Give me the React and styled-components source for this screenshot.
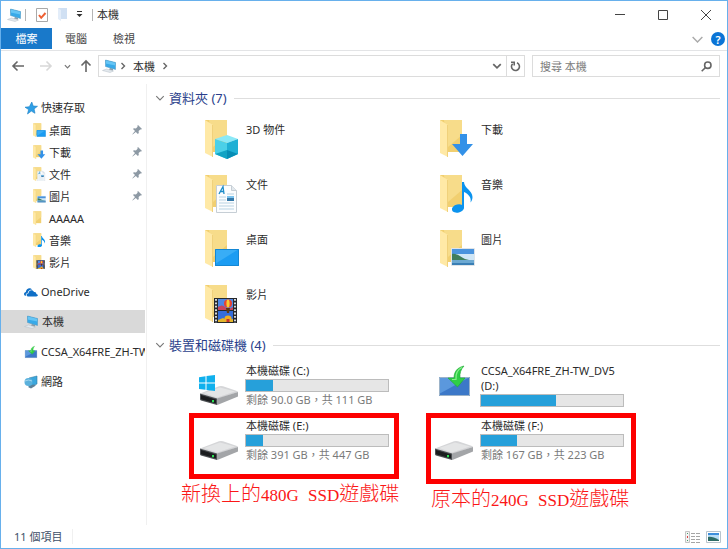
import React from "react";
import styled, { createGlobalStyle, css } from "styled-components";

const GlobalStyle = createGlobalStyle`
  *, *::before, *::after { box-sizing: border-box; }
  body {
    margin: 0;
    background: #fff;
    color: #2b2b2b;
    font: 11px/15px "Noto Sans", "Noto Sans CJK TC", sans-serif;
  }
  button, input { font: inherit; color: inherit; }
  svg { display: block; flex: none; }
`;

const PlainButton = styled.button.attrs({ type: "button" })`
  display: flex;
  align-items: center;
  justify-content: center;
  flex: none;
  padding: 0;
  border: 0;
  background: none;
`;

const Window = styled.div`
  display: flex;
  flex-direction: column;
  min-height: 100vh;
  border: 1px solid #67b0ec;
  background: #fff;
`;

const TitleBar = styled.header`
  display: flex;
  align-items: center;
  height: 27px;
  padding-left: 6px;
`;

const QuickTools = styled.div`
  display: flex;
  align-items: center;
  flex: none;
`;

const ToolButton = styled(PlainButton)`
  width: ${(p) => p.$width}px;
  height: 20px;
`;

const Divider = styled.span`
  width: 1px;
  height: 12px;
  background: #b5b5b5;
`;

const WindowTitle = styled.h1`
  flex: 1;
  margin: 0 0 0 4px;
  font-size: 11px;
  font-weight: 400;
`;

const CaptionButton = styled(PlainButton)`
  width: 43px;
  height: 26px;
`;

const TabBar = styled.nav`
  display: flex;
  align-items: stretch;
  height: 23px;
  border-bottom: 1px solid #e3e4e6;
`;

const Tab = styled(PlainButton)`
  width: ${(p) => (p.$primary ? 51 : 48)}px;
  height: 21px;
  color: ${(p) => (p.$primary ? "#fff" : "#444")};
  background: ${(p) => (p.$primary ? "#1979ca" : "transparent")};
`;

const TabTools = styled.div`
  display: flex;
  align-items: center;
  gap: 7px;
  margin-left: auto;
  padding-right: 2px;
`;

const HelpButton = styled(PlainButton)`
  width: 14px;
  height: 14px;
  border-radius: 50%;
  background: #0a74d6;
  color: #fff;
  font-size: 11px;
  font-weight: 600;
`;

const NavRow = styled.div`
  display: flex;
  align-items: center;
  gap: 7px;
  padding: 4px 7px 7px 3px;
`;

const NavButtons = styled.div`
  display: flex;
  align-items: center;
  flex: none;
  margin-right: -7px;
`;

const AddressBar = styled.div`
  display: flex;
  align-items: center;
  flex: 1;
  min-width: 0;
  height: 22px;
  border: 1px solid #dcdcdc;
`;

const Crumb = styled(PlainButton)`
  padding: 0 3px;
`;

const AddressEnd = styled.div`
  display: flex;
  align-items: center;
  height: 100%;
  margin-left: auto;
`;

const RefreshButton = styled(PlainButton)`
  width: 18px;
  height: 100%;
  border-left: 1px solid #dcdcdc;
`;

const SearchBox = styled.label`
  display: flex;
  align-items: center;
  flex: 0 1 188px;
  height: 22px;
  padding: 0 7px;
  border: 1px solid #dcdcdc;
`;

const SearchInput = styled.input`
  flex: 1;
  min-width: 0;
  padding: 0;
  border: 0;
  outline: 0;
  background: none;
  &::placeholder { color: #7c7c7c; opacity: 1; }
`;

const Body = styled.div`
  display: flex;
  flex: 1;
`;

const Sidebar = styled.nav`
  display: flex;
  flex-direction: column;
  flex: none;
  gap: 7px;
  width: 146px;
  padding: 12px 1px 0 0;
  border-right: 1px solid #f0f0f0;
`;

const SideGroup = styled.div`
  display: flex;
  flex-direction: column;
`;

const SideItem = styled.a`
  display: flex;
  align-items: center;
  height: 23px;
  gap: 3px;
  padding-left: 23px;
  overflow: hidden;
  white-space: nowrap;
  color: #2b2b2b;
  text-decoration: none;
  ${(p) => p.$child && css`
    height: 22px;
    padding-left: 31px;
    padding-right: 3px;
  `}
  ${(p) => p.$selected && css`background: #d9d9d9;`}
`;

const PinSlot = styled.span`
  margin-left: auto;
`;

const Main = styled.main`
  flex: 1;
  min-width: 0;
  padding: 4px 7px 0 8px;
`;

const Group = styled.section`
  margin-bottom: 4px;
`;

const GroupHeader = styled.h2`
  display: flex;
  align-items: center;
  height: 20px;
  margin: 0;
  color: #2b3f8c;
  font-size: 13px;
  font-weight: 400;
  line-height: 20px;
  &::after {
    content: "";
    flex: 1;
    height: 1px;
    margin-left: 7px;
    background: #dedede;
  }
`;

const GroupToggle = styled(PlainButton)`
  gap: 4px;
`;

const TileGrid = styled.div`
  display: grid;
  grid-template-columns: repeat(auto-fill, 235px);
  row-gap: 8px;
  padding: ${(p) => (p.$dense ? 5 : 11)}px 0 0 44px;
`;

const Tile = styled.article`
  position: relative;
  display: flex;
  gap: 4px;
  height: 47px;
`;

const TileText = styled.div`
  width: 144px;
  padding-top: 3px;
`;

const TileName = styled.div`
  padding: 0 0 1px 1px;
`;

const Capacity = styled.div`
  height: 13px;
  border: 1px solid #bcbcbc;
  background: #e6e6e6;
`;

const CapacityFill = styled.div`
  height: 100%;
  width: ${(p) => p.$percent}%;
  background: #26a0da;
`;

const TileNote = styled.div`
  padding: 0 0 0 1px;
  color: #7a7a7a;
  white-space: nowrap;
`;

const Callout = styled.div`
  position: absolute;
  top: -2px;
  left: ${(p) => (p.$tall ? -8 : -10)}px;
  width: 210px;
  height: ${(p) => (p.$tall ? 71 : 66)}px;
  border: 5px solid #fd0000;
`;

const CalloutText = styled.p`
  position: absolute;
  top: 100%;
  left: ${(p) => (p.$tall ? 0 : -13)}px;
  margin: 8px 0 0;
  color: #fb1717;
  font-family: "Liberation Serif", "Noto Sans CJK TC", serif;
  font-size: 20px;
  font-weight: 300;
  line-height: 24px;
  white-space: nowrap;
`;

const CalloutLatin = styled.span`
  font-size: 17px;
`;

const CalloutUnit = styled(CalloutLatin)`
  margin-left: 5px;
`;

const StatusBar = styled.footer`
  display: flex;
  align-items: center;
  height: 23px;
  padding: 0 6px 0 13px;
  color: #3d5068;
`;

const StatusCount = styled.span`
  padding-right: 10px;
  border-right: 1px solid #f0f0f0;
`;

const ViewSwitch = styled.div`
  display: flex;
  gap: 6px;
  margin-left: auto;
`;

function PcIcon() {
  return (
    <svg width="15" height="14" viewBox="0 0 15 14">
      <path d="M.5 11.500l4-1.500 7 2-3.500 1.500z" fill="#e3e9ee" stroke="#b4bec6" strokeWidth=".5" />
      <path d="M8 9l3 .8v1.700l-4-1z" fill="#8c9ca8" />
      <path d="M3.500 1l10 2.500v7l-10-3z" fill="#38aae9" />
      <path d="M3.500 1l10 2.500v3l-10-2z" fill="#65c5f5" />
      <path d="M3.500 1l10 2.500v7l-10-3z" fill="none" stroke="#4a93bd" strokeWidth=".5" />
    </svg>
  );
}

function Chevron({ dir = "down", size = 8, color = "#555", weight = 1.4 }) {
  const d = dir === "down" ? "M1 2.5l3 3 3-3" : "M2.5 1l3 3-3 3";
  return (
    <svg width={size} height={size} viewBox="0 0 8 8" fill="none" stroke={color} strokeWidth={weight}>
      <path d={d} />
    </svg>
  );
}

function Arrow({ dir, color = "#666" }) {
  const paths = {
    left: "M13 7H2M6.5 2.500L2 7l4.500 4.500",
    right: "M1 7h11M7.500 2.500L12 7l-4.500 4.500",
    up: "M7 13V2M2.500 6.500L7 2l4.500 4.500",
  };
  return (
    <svg width="14" height="14" viewBox="0 0 14 14" fill="none" stroke={color} strokeWidth="1.600">
      <path d={paths[dir]} />
    </svg>
  );
}

function PinIcon() {
  return (
    <svg width="10" height="10" viewBox="0 0 10 10">
      <path d="M6 0l4 4-1 .6-.7-.2-1.700 1.700.2 2-.9.9L3.800 6.900.6 9.600l-.3-.3L3 6.100 1 4.100l.9-.9 2 .2 1.700-1.700-.2-.9z" fill="#8d99a4" />
    </svg>
  );
}

const overlays = {
  cube: (
    <g>
      <path d="M16 20l12-4 11 4-11 4z" fill="#8be9f7" />
      <path d="M16 20l12 4v16l-12-5z" fill="#4bd0e8" />
      <path d="M39 20l-11 4v16l11-5z" fill="#1fb0d5" />
      <path d="M16 35l12-4v9z" fill="#12a3c4" />
      <path d="M39 35l-11-4v9z" fill="#078db5" />
    </g>
  ),
  arrow: <path d="M26 15h7v10h6L28.500 37 18 25h8z" fill="#3391e8" />,
  document: (
    <g>
      <path d="M17.500 11.500h15l5 5v22h-20z" fill="#fcfdfe" stroke="#c6ced5" />
      <path d="M32.500 11.500v5h5" fill="#e3e9ee" stroke="#c6ced5" />
      <path d="M20 20l4-7.500 1 7.500M21.500 17.500H25" fill="none" stroke="#1d8cc8" strokeWidth="1.300" />
      <path d="M20 23h7M20 26h7M20 29h15M20 32h15M20 35h15M28 20h7" stroke="#b9d3e3" strokeWidth="1" />
      <path d="M28 22h7v5h-7z" fill="#3578a8" />
      <path d="M28 22h7v2h-7z" fill="#7cc4ef" />
    </g>
  ),
  note: (
    <g fill="#0b93ee">
      <ellipse cx="24" cy="34.500" rx="6.200" ry="4" transform="rotate(-14 24 34.500)" />
      <path d="M28 8h2c0 6 8.500 8.500 8.500 15 0 2.500-1 4.500-2 5.500 1.200-5-2-8.500-6.500-10.500v16h-2z" />
    </g>
  ),
  desktop: (
    <g>
      <path d="M16 20h24v17H16z" fill="#1b9cf2" />
      <path d="M16 20h24L16 35z" fill="#38adf6" />
      <path d="M16.500 20.500h23v16h-23z" fill="none" stroke="#1487d4" />
    </g>
  ),
  picture: (
    <g>
      <path d="M17.500 19.500h23v17h-23z" fill="#fff" stroke="#dfe4e8" />
      <path d="M18 20h22v16H18z" fill="#cfe6f6" />
      <path d="M18 20h22v5H18z" fill="#4a93dd" />
      <path d="M18 25c5-1 9 3 13 5l8 2H18z" fill="#3f7d5c" />
      <path d="M18 31h22v5H18z" fill="#6da9d2" />
      <path d="M18 34h22v2H18z" fill="#3a7fb5" />
    </g>
  ),
  film: (
    <g>
      <path d="M15 14h23v25H15z" fill="#26282c" />
      <path d="M19 15h15v11H19z" fill="#4e87e4" />
      <path d="M19 27h15v11H19z" fill="#346ddb" />
      <path d="M19 23q4-3 7 0t8 0v3H19z" fill="#c7455d" />
      <path d="M19 36l5-2 4 2 6-1v3H19z" fill="#e1b52c" />
      <ellipse cx="29" cy="19.500" rx="4" ry="4" fill="#e94232" />
      <ellipse cx="29" cy="19.500" rx="1.600" ry="4" fill="#f6cd31" />
      <path d="M27 24h4l-1 5h-2z" fill="#5c3816" />
      <ellipse cx="29" cy="34.500" rx="3.500" ry="3" fill="#f0ae21" />
      <path d="M27.500 35h3v3h-3z" fill="#cb332c" />
      <path d="M17 15v24M36 15v24" stroke="#e9ecef" strokeWidth="1.800" strokeDasharray="1.800 1.600" />
    </g>
  ),
};

function FolderShape() {
  return (
    <g>
      <path d="M6 1h22v32H6z" fill="#f1cf70" />
      <path d="M10 1h18v15L14 28z" fill="#f7dc8a" />
      <path d="M6 1l8 5v32l-8-4z" fill="#ffe9a6" />
      <path d="M13.500 6v32" stroke="#ecca70" strokeWidth=".8" />
    </g>
  );
}

function FolderIcon({ kind }) {
  return (
    <svg width="42" height="42" viewBox="0 0 42 42">
      <FolderShape />
      {overlays[kind]}
    </svg>
  );
}

function SmallFolderIcon({ kind }) {
  return (
    <svg width="14" height="14" viewBox="4 0 36 38">
      <FolderShape />
      {overlays[kind]}
    </svg>
  );
}

function DriveIcon({ windows }) {
  return (
    <svg width="42" height="46" viewBox="0 0 42 46">
      <path d="M1 33.500L20 26.300q2-.6 4 0L38 31q1.500.6.500 1.300L18 39z" fill="#d5d6d8" />
      <path d="M5 33l16-5.500 15 4L18 37.500z" fill="#e4e5e6" />
      <path d="M18 38.500L39 32v4.500L19.500 44.600 18 45z" fill="#a3a5a8" />
      <path d="M1 33.500l17 5V45L2 40.500q-1-.4-1-1.500z" fill="#4c4f53" />
      <path d="M2 35l15 4.500v4L2 39.300z" fill="#1b1d1f" />
      <path d="M13 40h2v2.200h-2z" fill="#2cdf53" />
      {windows && (
        <path d="M0 17.200l6.500-1v6.300H0zM7.500 16L16 15v7.500H7.500zM0 23.500h6.500v6.300L0 29zM7.500 23.500H16V31l-8.500-1.100z" fill="#10b0ed" />
      )}
    </svg>
  );
}

function InstallerShape() {
  return (
    <g>
      <path d="M5 17h31v19H5z" fill="#3c78c8" />
      <path d="M5 17h31L5 34z" fill="#5b98dd" />
      <path d="M5.500 17.500h30v18h-30z" fill="none" stroke="#9cb3c9" />
      <path d="M30 6c-7 1.500-10 6-10 12h-6l9.500 9L31 18h-5c-.5-5 1-9 4-12z" fill="#2fcf45" stroke="#1fa832" strokeWidth=".6" />
      <path d="M28 7.500c-4.500 2-6.500 6-6 12h-4" fill="none" stroke="#86ef8b" strokeWidth="1.200" />
    </g>
  );
}

function InstallerIcon() {
  return <svg width="42" height="46" viewBox="0 0 42 46"><InstallerShape /></svg>;
}

function SmallInstallerIcon() {
  return <svg width="14" height="14" viewBox="3 3 35 36"><InstallerShape /></svg>;
}

function StarIcon() {
  return (
    <svg width="14" height="14" viewBox="0 0 14 14">
      <path d="M7.800 1l1.400 4 4.300.3-3.400 2.600.9 4.400-3.700-2.200L3.500 13l1.100-4.400L1 6.200l4.300-.5z" fill="#2e9fe6" stroke="#1c7fc4" strokeWidth=".6" />
    </svg>
  );
}

function CloudIcon() {
  return (
    <svg width="14" height="14" viewBox="0 0 14 14" fill="#0f6fc6">
      <path d="M1.800 11C.6 10.800 0 10 0 9s.8-1.900 1.800-2C2 4.400 4.400 2.700 6.700 3.400 7.300 3.600 7.800 4 8.200 4.500 5.500 4.500 4 6.200 3.800 7.800 2.300 8.300 1.500 9.500 1.800 11z" />
      <path d="M4.500 11.500c-2.500 0-2.500-3 0-3.200.1-3.300 4.300-4 5.500-1.300 1.600-.3 2.400.8 2.300 1.900 2 .2 2.100 2.600 0 2.600z" />
    </svg>
  );
}

function NetworkIcon() {
  return (
    <svg width="14" height="14" viewBox="0 0 14 14">
      <path d="M5 3l8-2v8l-8 3z" fill="#3ba7dd" stroke="#347da4" strokeWidth=".6" />
      <circle cx="4.500" cy="7" r="4" fill="#5bb1dc" />
      <path d="M1 6q3.500-2 7 0" fill="none" stroke="#c2e7f7" strokeWidth=".7" />
      <path d="M4 12l5-2.500 3 1L7 13.500z" fill="#5f8198" />
    </svg>
  );
}

const quickAccess = [
  { name: "桌面", kind: "desktop", pinned: true },
  { name: "下載", kind: "arrow", pinned: true },
  { name: "文件", kind: "document", pinned: true },
  { name: "圖片", kind: "picture", pinned: true },
  { name: "AAAAA" },
  { name: "音樂", kind: "note" },
  { name: "影片", kind: "film" },
];

const folders = [
  { name: "3D 物件", kind: "cube" },
  { name: "下載", kind: "arrow" },
  { name: "文件", kind: "document" },
  { name: "音樂", kind: "note" },
  { name: "桌面", kind: "desktop" },
  { name: "圖片", kind: "picture" },
  { name: "影片", kind: "film" },
];

const drives = [
  { name: "本機磁碟 (C:)", icon: <DriveIcon windows />, used: 19, note: "剩餘 90.0 GB，共 111 GB" },
  { name: "CCSA_X64FRE_ZH-TW_DV5 (D:)", icon: <InstallerIcon />, used: 53 },
  {
    name: "本機磁碟 (E:)", icon: <DriveIcon />, used: 12, note: "剩餘 391 GB，共 447 GB",
    callout: { before: "新換上的", size: "480G", unit: "SSD", after: "遊戲碟" },
  },
  {
    name: "本機磁碟 (F:)", icon: <DriveIcon />, used: 25, note: "剩餘 167 GB，共 223 GB",
    callout: { before: "原本的", size: "240G", unit: "SSD", after: "遊戲碟", tall: true },
  },
];

function TileGroup({ title, dense, children }) {
  return (
    <Group>
      <GroupHeader>
        <GroupToggle aria-expanded="true">
          <Chevron size={10} color="#777" weight={0.9} />
          {title}
        </GroupToggle>
      </GroupHeader>
      <TileGrid $dense={dense}>{children}</TileGrid>
    </Group>
  );
}

function DriveTile({ drive }) {
  const { name, icon, used, note, callout } = drive;
  return (
    <Tile>
      {icon}
      <TileText>
        <TileName>{name}</TileName>
        <Capacity role="progressbar" aria-label={name} aria-valuenow={used} aria-valuemin={0} aria-valuemax={100}>
          <CapacityFill $percent={used} />
        </Capacity>
        {note && <TileNote>{note}</TileNote>}
      </TileText>
      {callout && (
        <Callout $tall={callout.tall}>
          <CalloutText $tall={callout.tall}>
            {callout.before}
            <CalloutLatin>{callout.size} </CalloutLatin>
            <CalloutUnit>{callout.unit}</CalloutUnit>
            {callout.after}
          </CalloutText>
        </Callout>
      )}
    </Tile>
  );
}

export default function App() {
  return (
    <>
      <GlobalStyle />
      <Window>
        <TitleBar>
          <QuickTools>
            <PcIcon />
            <ToolButton as="span" $width={3} />
            <Divider />
            <ToolButton $width={32} aria-label="內容">
              <svg width="12" height="14" viewBox="0 0 12 14">
                <path d="M.5.500h11v13H.5z" fill="#fff" stroke="#a9a9a9" />
                <path d="M3 7l2.200 2.800L9.500 5" fill="none" stroke="#ee6033" strokeWidth="2" />
              </svg>
            </ToolButton>
            <ToolButton $width={9} aria-label="新增資料夾">
              <svg width="9" height="13" viewBox="0 0 9 13">
                <path d="M0 0h9v11H0z" fill="#d0e0f3" />
                <path d="M0 0l3 2v11l-3-2z" fill="#e3edf9" />
              </svg>
            </ToolButton>
            <ToolButton $width={25} aria-label="自訂快速存取工具列">
              <svg width="7" height="7" viewBox="0 0 7 7">
                <path d="M1 0h5v1H1zM.5 3h6l-3 3z" fill="#333" />
              </svg>
            </ToolButton>
            <Divider />
          </QuickTools>
          <WindowTitle>本機</WindowTitle>
          <CaptionButton aria-label="最小化">
            <svg width="10" height="10" viewBox="0 0 10 10"><path d="M0 4.500h10" stroke="#444" /></svg>
          </CaptionButton>
          <CaptionButton aria-label="最大化">
            <svg width="10" height="10" viewBox="0 0 10 10"><path d="M.5.500h9v9h-9z" fill="none" stroke="#444" /></svg>
          </CaptionButton>
          <CaptionButton aria-label="關閉">
            <svg width="10" height="10" viewBox="0 0 10 10"><path d="M0 0l10 10M10 0L0 10" stroke="#444" /></svg>
          </CaptionButton>
        </TitleBar>

        <TabBar>
          <Tab $primary>檔案</Tab>
          <Tab>電腦</Tab>
          <Tab>檢視</Tab>
          <TabTools>
            <PlainButton aria-label="展開功能區">
              <Chevron size={13} color="#aaa" weight={0.9} />
            </PlainButton>
            <HelpButton aria-label="說明">?</HelpButton>
          </TabTools>
        </TabBar>

        <NavRow>
          <NavButtons>
            <ToolButton $width={28} aria-label="上一頁"><Arrow dir="left" /></ToolButton>
            <ToolButton $width={28} aria-label="下一頁"><Arrow dir="right" color="#d8d8d8" /></ToolButton>
            <ToolButton $width={14} aria-label="最近的位置"><Chevron size={7} color="#777" /></ToolButton>
            <ToolButton $width={24} aria-label="上移"><Arrow dir="up" /></ToolButton>
          </NavButtons>
          <AddressBar>
            <ToolButton as="span" $width={20}><PcIcon /></ToolButton>
            <Chevron dir="right" color="#666" />
            <ToolButton as="span" $width={3} />
            <Crumb>本機</Crumb>
            <ToolButton as="span" $width={3} />
            <Chevron dir="right" color="#666" />
            <AddressEnd>
              <ToolButton $width={18} aria-label="先前的位置"><Chevron size={10} color="#666" /></ToolButton>
              <RefreshButton aria-label="重新整理">
                <svg width="11" height="11" viewBox="0 0 11 11" fill="none" stroke="#666" strokeWidth="1.600">
                  <path d="M7 1.800A4 4 0 1 1 2.600 2.700M1 1.300h3.200v3.200" />
                </svg>
              </RefreshButton>
            </AddressEnd>
          </AddressBar>
          <SearchBox>
            <SearchInput type="text" aria-label="搜尋 本機" placeholder="搜尋 本機" />
            <svg width="11" height="11" viewBox="0 0 11 11" fill="none" stroke="#666" strokeWidth="1.600">
              <circle cx="6.800" cy="4.200" r="3.200" />
              <path d="M4.500 6.500L.7 10.300" />
            </svg>
          </SearchBox>
        </NavRow>

        <Body>
          <Sidebar>
            <SideGroup>
              <SideItem href="#quick"><StarIcon />快速存取</SideItem>
              {quickAccess.map((item) => (
                <SideItem key={item.name} href="#folder" $child>
                  <SmallFolderIcon kind={item.kind} />
                  {item.name}
                  {item.pinned && <PinSlot><PinIcon /></PinSlot>}
                </SideItem>
              ))}
            </SideGroup>
            <SideItem href="#onedrive"><CloudIcon />OneDrive</SideItem>
            <SideItem href="#pc" $selected><PcIcon />本機</SideItem>
            <SideItem href="#dvd"><SmallInstallerIcon />CCSA_X64FRE_ZH-TW_DV5 (D:)</SideItem>
            <SideItem href="#network"><NetworkIcon />網路</SideItem>
          </Sidebar>

          <Main>
            <TileGroup title="資料夾 (7)">
              {folders.map((folder) => (
                <Tile key={folder.name}>
                  <FolderIcon kind={folder.kind} />
                  <TileText><TileName>{folder.name}</TileName></TileText>
                </Tile>
              ))}
            </TileGroup>
            <TileGroup title="裝置和磁碟機 (4)" dense>
              {drives.map((drive) => <DriveTile key={drive.name} drive={drive} />)}
            </TileGroup>
          </Main>
        </Body>

        <StatusBar>
          <StatusCount>11 個項目</StatusCount>
          <ViewSwitch>
            <PlainButton aria-label="詳細資料">
              <svg width="15" height="12" viewBox="0 0 15 12">
                <path d="M.5.500h4v11h-4z" fill="#f4f4f4" stroke="#c4c4c4" />
                <path d="M2 2h1v1H2zM2 9h1v1H2z" fill="#4a9a6a" />
                <path d="M2 5h1v2H2z" fill="#dd4040" />
                <path d="M6 2.500h9M6 5.500h9M6 8.500h9M6 11.500h9" stroke="#a5a5a5" strokeDasharray="4 1" />
              </svg>
            </PlainButton>
            <PlainButton aria-label="大圖示">
              <svg width="15" height="12" viewBox="0 0 15 12">
                <path d="M.5.500h14v11H.5z" fill="#fff" stroke="#b9c4cd" />
                <path d="M2 2h11v8H2z" fill="#b7dcf5" />
                <path d="M2 2h11v2H2z" fill="#3d8edb" />
                <path d="M2 6q4-1 11 3v1H2z" fill="#2e6c66" />
              </svg>
            </PlainButton>
          </ViewSwitch>
        </StatusBar>
      </Window>
    </>
  );
}
